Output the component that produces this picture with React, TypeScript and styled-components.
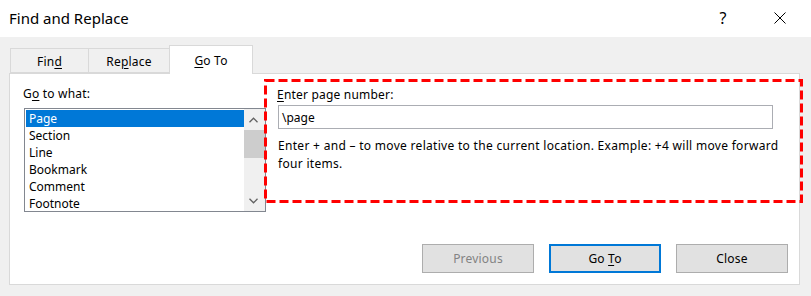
import React from "react";
import styled, { createGlobalStyle } from "styled-components";

const Global = createGlobalStyle`
  html, body { margin: 0; padding: 0; background: #f0f0f0; }
  body { font-family: "Noto Sans", "Segoe UI", sans-serif; color: #000; }
`;

const Window = styled.div`
  width: 811px;
  height: 296px;
  background: #f0f0f0;
  display: flex;
  flex-direction: column;
  overflow: hidden;
  font-size: 12px;
`;

const TitleBar = styled.div`
  height: 37px;
  background: #fff;
  display: flex;
  align-items: center;
  padding-left: 9px;
  padding-right: 8px;
  flex-shrink: 0;
`;

const Title = styled.div`
  font-size: 15px;
  flex: 1;
  margin-top: -2px;
`;

const TitleButton = styled.div<{ $gap?: number }>`
  width: 46px;
  height: 37px;
  margin-right: ${(p) => p.$gap ?? 0}px;
  display: flex;
  align-items: center;
  justify-content: center;
  font-size: 16px;
  color: #000;
  margin-top: -1px;
`;

const Body = styled.div`
  flex: 1;
  display: flex;
  flex-direction: column;
  padding: 8px 11px 11px 9px;
`;

const TabRow = styled.div`
  display: flex;
  align-items: flex-end;
  height: 28px;
  padding-left: 2px;
  position: relative;
  z-index: 1;
`;

const Tab = styled.div<{ $active?: boolean; $w: number }>`
  width: ${(p) => p.$w}px;
  height: ${(p) => (p.$active ? 29 : 25)}px;
  box-sizing: border-box;
  display: flex;
  align-items: center;
  justify-content: center;
  background: ${(p) => (p.$active ? "#fff" : "#f0f0f0")};
  border: 1px solid #d9d9d9;
  border-bottom: ${(p) => (p.$active ? "none" : "1px solid #d9d9d9")};
  margin-left: -1px;
  font-size: 12px;
  letter-spacing: 0.2px;
  padding-top: ${(p) => (p.$active ? 1 : 2)}px;
  margin-bottom: ${(p) => (p.$active ? -1 : 0)}px;
`;

const U = styled.span`
  text-decoration: underline;
  text-underline-offset: 2px;
`;

const Panel = styled.div`
  flex: 1;
  background: #fff;
  border: 1px solid #d9d9d9;
  display: flex;
  flex-direction: column;
  padding: 5px 11px 11px 14px;
`;

const TopRow = styled.div`
  display: flex;
  align-items: flex-start;
`;

const LeftCol = styled.div`
  width: 242px;
  flex-shrink: 0;
  display: flex;
  flex-direction: column;
  padding-top: 7px;
`;

const Label = styled.div`
  line-height: 16px;
  height: 16px;
  margin-left: -1px;
  letter-spacing: 0.2px;
`;

const ListBox = styled.div`
  margin-top: 6px;
  height: 104px;
  box-sizing: border-box;
  border: 1px solid #828790;
  display: flex;
`;

const Items = styled.div`
  flex: 1;
  display: flex;
  flex-direction: column;
  padding: 1px 0 0 1px;
`;

const Item = styled.div<{ $sel?: boolean }>`
  height: 17px;
  line-height: 17px;
  padding-left: 3px;
  background: ${(p) => (p.$sel ? "#0078d7" : "transparent")};
  color: ${(p) => (p.$sel ? "#fff" : "#000")};
`;

const ScrollBar = styled.div`
  width: 21px;
  background: #f0f0f0;
  display: flex;
  flex-direction: column;
`;

const Arrow = styled.div`
  height: 21px;
  display: flex;
  align-items: center;
  justify-content: center;
  padding-right: 2px;
`;

const Track = styled.div`
  flex: 1;
  display: flex;
  flex-direction: column;
`;

const Thumb = styled.div`
  height: 28px;
  background: #cdcdcd;
`;

const RightBox = styled.div`
  width: 539px;
  height: 124px;
  margin-left: -2px;
  box-sizing: border-box;
  padding: 8px 10px 0 14px;
  display: flex;
  flex-direction: column;
  position: relative;
  z-index: 2;
`;

const DashFrame = styled.svg`
  position: absolute;
  left: 0;
  top: 0;
  pointer-events: none;
`;

const Input = styled.div`
  margin-top: 2px;
  margin-right: 5px;
  height: 24px;
  box-sizing: border-box;
  border: 1px solid #abadb3;
  display: flex;
  align-items: center;
  padding-left: 3px;
`;

const Help = styled.div`
  margin-top: 8px;
  line-height: 18px;
  letter-spacing: 0.3px;
  white-space: nowrap;
`;

const ButtonRow = styled.div`
  margin-top: auto;
  display: flex;
  justify-content: flex-end;
  gap: 15px;
`;

const Button = styled.div<{ $primary?: boolean; $disabled?: boolean }>`
  width: 112px;
  height: 29px;
  box-sizing: border-box;
  background: #e1e1e1;
  border: ${(p) => (p.$primary ? "2px solid #0078d7" : "1px solid #adadad")};
  color: ${(p) => (p.$disabled ? "#838383" : "#000")};
  display: flex;
  align-items: center;
  justify-content: center;
  letter-spacing: 0.2px;
`;

const Chevron = ({ up }: { up?: boolean }) => (
  <svg width="9" height="6" viewBox="0 0 9 6">
    <path
      d={up ? "M0.5 5.2 L4.5 1.2 L8.5 5.2" : "M0.5 0.8 L4.5 4.8 L8.5 0.8"}
      fill="none"
      stroke="#606060"
      strokeWidth="1.3"
    />
  </svg>
);

export default function App() {
  const items = ["Page", "Section", "Line", "Bookmark", "Comment", "Footnote"];
  return (
    <>
      <Global />
      <Window>
        <TitleBar>
          <Title>Find and Replace</Title>
          <TitleButton $gap={11}>?</TitleButton>
          <TitleButton>
            <svg width="12" height="12" viewBox="0 0 12 12">
              <path d="M0.5 0.5 L11.5 11.5 M11.5 0.5 L0.5 11.5" stroke="#000" strokeWidth="1" />
            </svg>
          </TitleButton>
        </TitleBar>
        <Body>
          <TabRow>
            <Tab $w={79}>
              <span>
                Fin<U>d</U>
              </span>
            </Tab>
            <Tab $w={82}>
              <span>
                Re<U>p</U>lace
              </span>
            </Tab>
            <Tab $w={84} $active>
              <span>
                <U>G</U>o To
              </span>
            </Tab>
          </TabRow>
          <Panel>
            <TopRow>
              <LeftCol>
                <Label>
                  G<U>o</U> to what:
                </Label>
                <ListBox>
                  <Items>
                    {items.map((it, i) => (
                      <Item key={it} $sel={i === 0}>
                        {it}
                      </Item>
                    ))}
                  </Items>
                  <ScrollBar>
                    <Arrow>
                      <Chevron up />
                    </Arrow>
                    <Track>
                      <Thumb />
                    </Track>
                    <Arrow>
                      <Chevron />
                    </Arrow>
                  </ScrollBar>
                </ListBox>
              </LeftCol>
              <RightBox>
                <DashFrame width="539" height="124">
                  <rect
                    x="1.5"
                    y="1.5"
                    width="536"
                    height="121"
                    fill="none"
                    stroke="#ff0000"
                    strokeWidth="3"
                    strokeDasharray="9 4"
                  />
                </DashFrame>
                <Label>
                  <U>E</U>nter page number:
                </Label>
                <Input>\page</Input>
                <Help>
                  Enter + and – to move relative to the current location. Example: +4 will move forward
                  <br />
                  four items.
                </Help>
              </RightBox>
            </TopRow>
            <ButtonRow>
              <Button $disabled>Previous</Button>
              <Button $primary>
                <span>
                  Go <U>T</U>o
                </span>
              </Button>
              <Button>Close</Button>
            </ButtonRow>
          </Panel>
        </Body>
      </Window>
    </>
  );
}
